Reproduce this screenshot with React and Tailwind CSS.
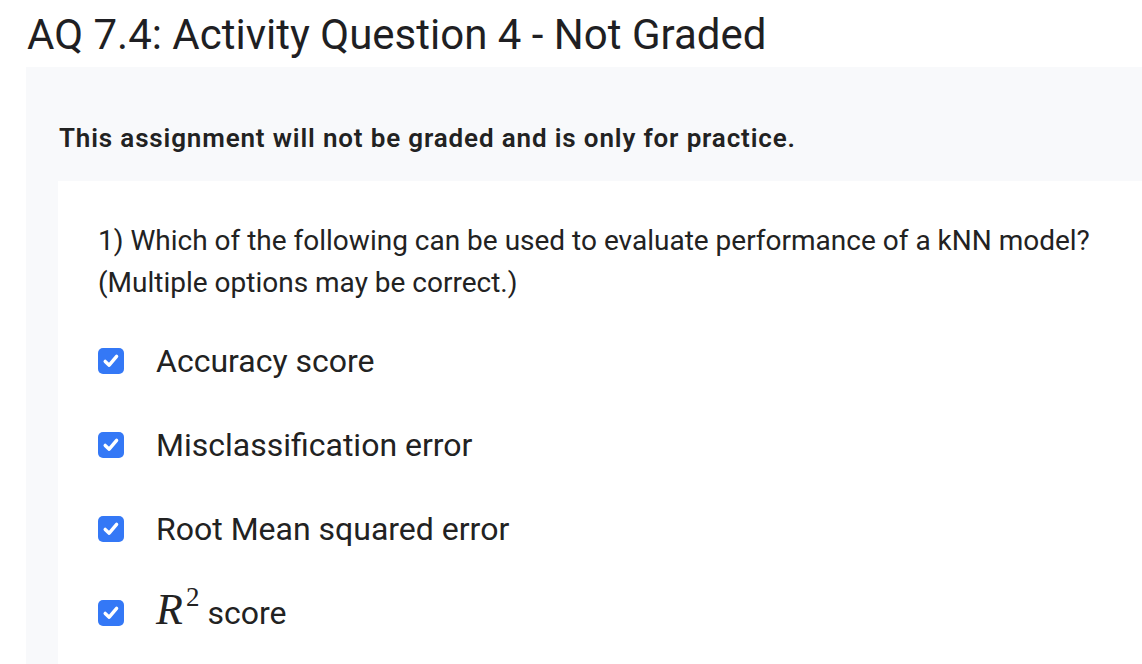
import React from "react";

const options = [
  { id: 1, label: "Accuracy score" },
  { id: 2, label: "Misclassification error" },
  { id: 3, label: "Root Mean squared error" },
  { id: 4, label: "score", math: true },
];

function CheckBox() {
  return (
    <span className="flex h-[26px] w-[26px] shrink-0 items-center justify-center rounded-[5px] bg-[#3478f6]">
      <svg width="20" height="20" viewBox="0 0 20 20" fill="none">
        <path
          d="M4.2 10.4 L8.2 14.2 L15.6 5.4"
          stroke="white"
          strokeWidth="3.4"
          strokeLinecap="round"
          strokeLinejoin="round"
        />
      </svg>
    </span>
  );
}

export default function App() {
  return (
    <div className="min-h-screen overflow-hidden bg-white font-['Roboto','Liberation_Sans',sans-serif] text-[#1f1f23]">
      {/* Title */}
      <h1 className="pl-[27px] pt-[9px] text-[42px] leading-[51px] font-normal whitespace-nowrap">
        AQ 7.4: Activity Question 4 - Not Graded
      </h1>

      {/* Grey panel */}
      <div className="ml-[26px] mt-[7px] bg-[#f8f9fb] pl-[33px] pt-[53px]">
        <p className="text-[26px] leading-[36px] font-semibold tracking-[0.85px] text-[#222] whitespace-nowrap">
          This assignment will not be graded and is only for practice.
        </p>

        {/* Question card */}
        <div className="mt-[25px] ml-[-1px] bg-white pl-[40px] pt-[39px] pb-[40px]">
          <p className="text-[28px] leading-[42px] text-[#222] whitespace-nowrap">
            1) Which of the following can be used to evaluate performance of a kNN model?
            <br />
            (Multiple options may be correct.)
          </p>

          <ul className="mt-[15px]">
            {options.map((opt) => (
              <li key={opt.id} className="flex h-[84px] items-center gap-[32px]">
                <CheckBox />
                <span className="text-[32px] leading-[40px] text-[#222] whitespace-nowrap">
                  {opt.math && (
                    <span className="mr-[8px] font-['Liberation_Serif',serif] text-[44px] leading-[0]">
                      <span className="italic">R</span>
                      <span className="ml-[3px] text-[27px] leading-[0] align-[18px]">2</span>
                    </span>
                  )}
                  {opt.label}
                </span>
              </li>
            ))}
          </ul>
        </div>
      </div>
    </div>
  );
}
